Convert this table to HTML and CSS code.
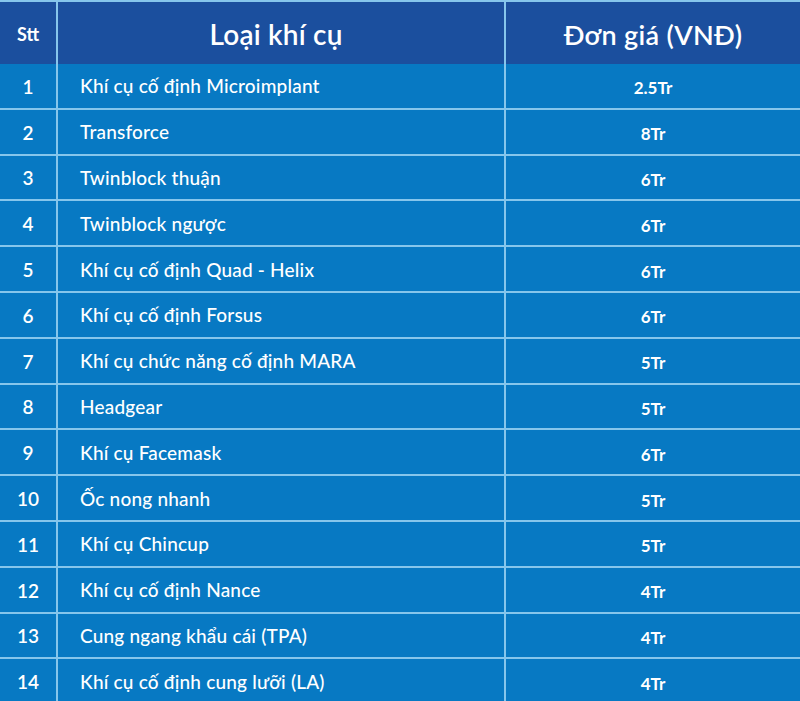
FILE: index.html
```html
<!DOCTYPE html>
<html lang="vi">
<head>
<meta charset="utf-8">
<link rel="stylesheet" href="styles.css">
</head>
<body>
<div class="price-table">
  <div class="row head">
    <div class="cell c-stt">Stt</div>
    <div class="cell c-name">Loại khí cụ</div>
    <div class="cell c-price">Đơn giá (VNĐ)</div>
  </div>
  <div class="row"><div class="cell c-stt">1</div><div class="cell c-name">Khí cụ cố định Microimplant</div><div class="cell c-price">2.5Tr</div></div>
  <div class="row"><div class="cell c-stt">2</div><div class="cell c-name">Transforce</div><div class="cell c-price">8Tr</div></div>
  <div class="row"><div class="cell c-stt">3</div><div class="cell c-name">Twinblock thuận</div><div class="cell c-price">6Tr</div></div>
  <div class="row"><div class="cell c-stt">4</div><div class="cell c-name">Twinblock ngược</div><div class="cell c-price">6Tr</div></div>
  <div class="row"><div class="cell c-stt">5</div><div class="cell c-name">Khí cụ cố định Quad - Helix</div><div class="cell c-price">6Tr</div></div>
  <div class="row"><div class="cell c-stt">6</div><div class="cell c-name">Khí cụ cố định Forsus</div><div class="cell c-price">6Tr</div></div>
  <div class="row"><div class="cell c-stt">7</div><div class="cell c-name">Khí cụ chức năng cố định MARA</div><div class="cell c-price">5Tr</div></div>
  <div class="row"><div class="cell c-stt">8</div><div class="cell c-name">Headgear</div><div class="cell c-price">5Tr</div></div>
  <div class="row"><div class="cell c-stt">9</div><div class="cell c-name">Khí cụ Facemask</div><div class="cell c-price">6Tr</div></div>
  <div class="row"><div class="cell c-stt">10</div><div class="cell c-name">Ốc nong nhanh</div><div class="cell c-price">5Tr</div></div>
  <div class="row"><div class="cell c-stt">11</div><div class="cell c-name">Khí cụ Chincup</div><div class="cell c-price">5Tr</div></div>
  <div class="row"><div class="cell c-stt">12</div><div class="cell c-name">Khí cụ cố định Nance</div><div class="cell c-price">4Tr</div></div>
  <div class="row"><div class="cell c-stt">13</div><div class="cell c-name">Cung ngang khẩu cái (TPA)</div><div class="cell c-price">4Tr</div></div>
  <div class="row"><div class="cell c-stt">14</div><div class="cell c-name">Khí cụ cố định cung lưỡi (LA)</div><div class="cell c-price">4Tr</div></div>
</div>
</body>
</html>
```

FILE: styles.css
```css
html, body {
  margin: 0;
  padding: 0;
  background: #0779c3;
  overflow: hidden;
}

.price-table {
  width: 800px;
  font-family: Lato, "Noto Sans", sans-serif;
  color: #ffffff;
  border-top: 2px solid #86c6ec;
}

.row {
  display: grid;
  grid-template-columns: 56px 448px 1fr;
  height: 45.8px;
  box-sizing: border-box;
  border-bottom: 2px solid #86c6ec;
  background: #0779c3;
}

.row.head {
  height: 62px;
  border-bottom: none;
  background: #1b4f9e;
}

.cell {
  display: flex;
  align-items: center;
  justify-content: center;
}

.cell + .cell {
  border-left: 2px solid #86c6ec;
}

.c-stt {
  font-size: 19px;
  font-weight: 600;
  padding-top: 1px;
}

.c-name {
  justify-content: flex-start;
  padding-left: 22px;
  font-size: 19px;
  font-weight: 500;
  letter-spacing: 0.2px;
}

.c-price {
  font-size: 17px;
  font-weight: 700;
  padding-top: 4px;
}

.head .c-stt {
  font-size: 18px;
  font-weight: 700;
  padding-top: 2px;
}

.head .c-name {
  justify-content: center;
  padding-left: 0;
  padding-right: 10px;
  font-size: 28px;
  font-weight: 600;
  letter-spacing: 0.2px;
  padding-top: 2px;
}

.head .c-price {
  font-size: 27px;
  font-weight: 600;
  letter-spacing: 0.3px;
  padding-top: 2px;
}
```
